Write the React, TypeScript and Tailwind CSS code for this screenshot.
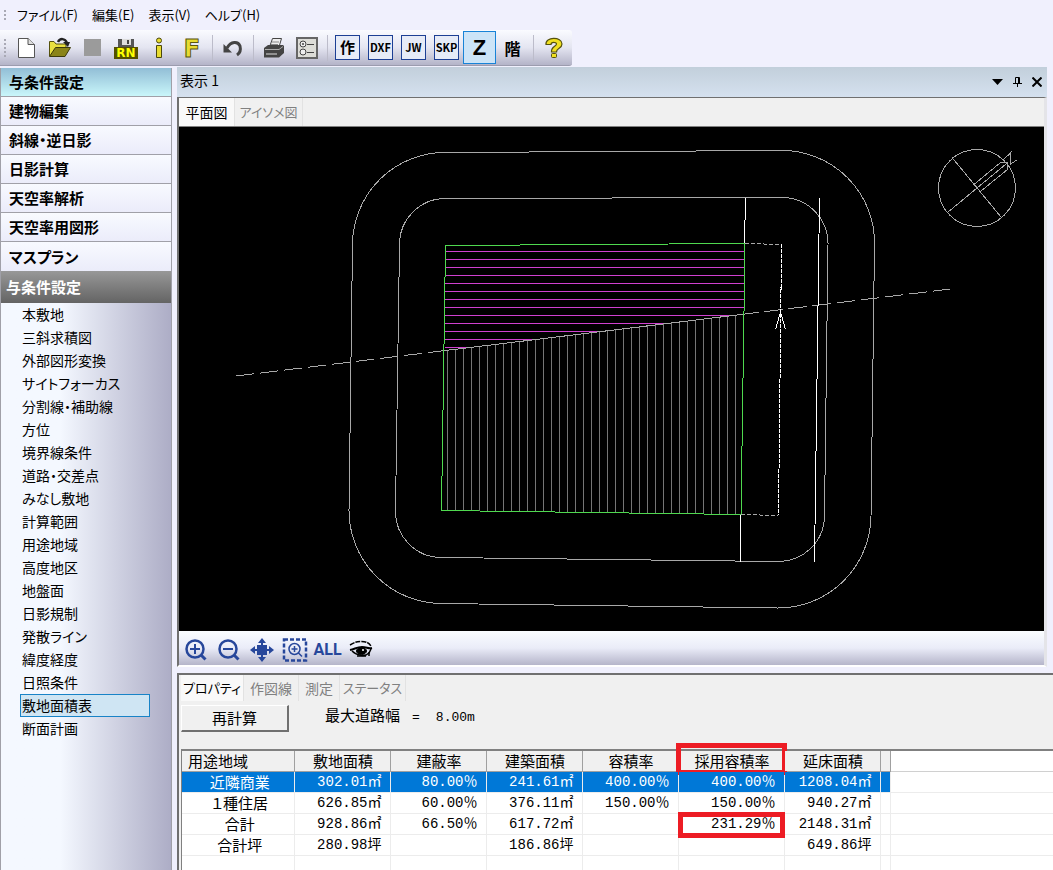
import { useState } from 'react';
import type { ReactNode } from 'react';
import clsx from 'clsx';

const MENUS = ['ファイル(F)', '編集(E)', '表示(V)', 'ヘルプ(H)'];

const SECTIONS = ['与条件設定', '建物編集', '斜線・逆日影', '日影計算', '天空率解析', '天空率用図形', 'マスプラン'];

const ITEMS = [
  '本敷地', '三斜求積図', '外部図形変換', 'サイトフォーカス', '分割線・補助線', '方位', '境界線条件',
  '道路・交差点', 'みなし敷地', '計算範囲', '用途地域', '高度地区', '地盤面', '日影規制',
  '発散ライン', '緯度経度', '日照条件', '敷地面積表', '断面計画',
];

const VIEW_TABS = [
  { name: '平面図', size: 'w-[56px] text-sm' },
  { name: 'アイソメ図', size: 'w-[68px] text-[13px]' },
];

const PROPERTY_TABS = [
  { name: 'プロパティ', size: 'w-[63px] text-[13px]' },
  { name: '作図線', size: 'w-[55px] text-sm' },
  { name: '測定', size: 'w-[41px] text-sm' },
  { name: 'ステータス', size: 'w-[66px] text-[13px]' },
];

const COLUMNS = ['用途地域', '敷地面積', '建蔽率', '建築面積', '容積率', '採用容積率', '延床面積'];

const ROWS = [
  ['近隣商業', '302.01㎡', '80.00％', '241.61㎡', '400.00％', '400.00％', '1208.04㎡'],
  ['１種住居', '626.85㎡', '60.00％', '376.11㎡', '150.00％', '150.00％', '940.27㎡'],
  ['合計', '928.86㎡', '66.50％', '617.72㎡', '', '231.29％', '2148.31㎡'],
  ['合計坪', '280.98坪', '', '186.86坪', '', '', '649.86坪'],
  ['', '', '', '', '', '', ''],
];

/* ---------- toolbar icons ---------- */

function NewIcon() {
  return (
    <svg width="24" height="24" viewBox="0 0 24 24">
      <path d="M3.500 2.500H13L19.500 8.500V21.500H3.500Z" fill="#fff" stroke="#555" />
      <path d="M13 2.500V8.500H19.500" fill="#ddd" stroke="#555" />
    </svg>
  );
}

function OpenIcon() {
  return (
    <svg width="24" height="24" viewBox="0 0 24 24">
      <path d="M1.500 20V5.500H6L8 8H18V12" fill="#e8e040" stroke="#55510c" />
      <path d="M1.500 20.500L7.500 11.500H22.500L17 20.500Z" fill="#8a8418" stroke="#3c3a0a" />
      <path d="M10 6C12 2 17 2 19 7" fill="none" stroke="#222" strokeWidth="2.500" />
      <path d="M15 6H22L20 11Z" fill="#222" />
    </svg>
  );
}

function SaveNameIcon() {
  return (
    <svg width="26" height="26" viewBox="0 0 26 26">
      <path d="M5 4H21V17H5Z" fill="#555" />
      <path d="M9 4H18V10H9Z" fill="#ddd" />
      <path d="M14 5H16V9H14Z" fill="#444" />
      <rect x="1" y="12" width="24" height="12" fill="#555000" />
      <text x="13" y="22" textAnchor="middle" fontSize="12" fontWeight="bold" fill="#ffff00" fontFamily="DejaVu Sans, sans-serif">RN</text>
    </svg>
  );
}

function InfoIcon() {
  return (
    <svg width="24" height="24" viewBox="0 0 24 24" fill="#e8dc30" stroke="#4b480d">
      <circle cx="12" cy="4.500" r="2.500" />
      <path d="M9.500 9.500H14.500V21.500H9.500Z" />
    </svg>
  );
}

function LetterFIcon() {
  return (
    <svg width="28" height="31" viewBox="0 0 28 31" className="shrink-0">
      <text x="14" y="25" textAnchor="middle" fontSize="24" fontWeight="bold" fill="#e8dc30" stroke="#5a5610" fontFamily="DejaVu Sans, sans-serif">F</text>
    </svg>
  );
}

function UndoIcon() {
  return (
    <svg width="24" height="24" viewBox="0 0 24 24">
      <path d="M6 12C10 5 17 5 19 10C20 14 19 17 16 19" fill="none" stroke="#444" strokeWidth="3" />
      <path d="M2.500 8V16.500H11Z" fill="#444" />
    </svg>
  );
}

function PrinterIcon() {
  return (
    <svg width="24" height="24" viewBox="0 0 24 24">
      <path d="M7.500 11L10.500 2.500H19.500L17 11Z" fill="#eee" stroke="#444" />
      <path d="M10 6H17M9 8.500H16" stroke="#888" />
      <path d="M2 12L6 9H21L22 10V17L17 21.500H2Z" fill="#444" />
      <path d="M3 13.500H17L21 10.500" fill="none" stroke="#aaa" />
      <path d="M4 18H15" stroke="#ddd" />
    </svg>
  );
}

function OptionsIcon() {
  return (
    <svg width="24" height="24" viewBox="0 0 24 24">
      <rect x="2" y="2" width="20" height="20" fill="#ddddd8" stroke="#666" strokeWidth="2" />
      <g fill="#eee" stroke="#444">
        <circle cx="8" cy="8" r="3" />
        <circle cx="8" cy="16" r="3" />
        <path d="M12 8.500H19M12 16.500H19" />
      </g>
      <circle cx="8" cy="8" r="1" fill="#444" />
    </svg>
  );
}

function HelpIcon() {
  return (
    <svg width="24" height="24" viewBox="0 0 24 24" fill="#f0e020" stroke="#55510c">
      <path d="M4 8.500C3 .5 20 .5 20 8C20 12.500 14.500 12 14.500 16H9.500C9 10.500 14.500 10.500 14.500 8C14.500 6 9 5.500 9 8.500Z" strokeWidth="1.200" />
      <rect x="9.500" y="17.500" width="5" height="4" rx="1" />
    </svg>
  );
}

function BoxLabel({ children }: { children: ReactNode }) {
  return (
    <span className="flex h-[25px] w-[25px] items-center justify-center border border-[#1c3f94] bg-[#e6ebf7] text-[11px] font-bold">
      {children}
    </span>
  );
}

function ToolButton({ label, active, children }: { label: string; active?: boolean; children: ReactNode }) {
  return (
    <button
      aria-label={label}
      className={clsx(
        'flex h-[33px] w-[33px] shrink-0 items-center justify-center border',
        active ? 'border-[#1883d7] bg-[#cce4f7]' : 'border-transparent',
      )}
    >
      {children}
    </button>
  );
}

function Separator() {
  return (
    <div className="flex w-2 shrink-0 justify-center">
      <div className="h-[26px] w-px bg-[#bcbcca]" />
    </div>
  );
}

function Grip({ dots }: { dots: number }) {
  return (
    <div className="flex w-[10px] shrink-0 flex-col items-center gap-[2px]">
      {Array.from({ length: dots }, (_, i) => (
        <span key={i} className="h-[2px] w-[2px] bg-[#a9a9b5]" />
      ))}
    </div>
  );
}

function MainToolbar() {
  return (
    <div className="flex h-9 w-[572px] shrink-0 items-center rounded-r-[3px] border-b border-[#9c9cae] bg-linear-to-b from-[#fafbff] via-[#e4e5f1] to-[#b4b4c8]">
      <Grip dots={5} />
      <ToolButton label="新規"><NewIcon /></ToolButton>
      <ToolButton label="開く"><OpenIcon /></ToolButton>
      <ToolButton label="保存"><span className="h-[17px] w-[17px] bg-[#9b9b9b]" /></ToolButton>
      <ToolButton label="名前を付けて保存"><SaveNameIcon /></ToolButton>
      <ToolButton label="情報"><InfoIcon /></ToolButton>
      <ToolButton label="書式"><LetterFIcon /></ToolButton>
      <Separator />
      <ToolButton label="元に戻す"><UndoIcon /></ToolButton>
      <Separator />
      <ToolButton label="印刷"><PrinterIcon /></ToolButton>
      <ToolButton label="設定"><OptionsIcon /></ToolButton>
      <Separator />
      <ToolButton label="作図"><BoxLabel><span className="text-[15px]">作</span></BoxLabel></ToolButton>
      <ToolButton label="DXF"><BoxLabel>DXF</BoxLabel></ToolButton>
      <ToolButton label="JW"><BoxLabel>JW</BoxLabel></ToolButton>
      <ToolButton label="SKP"><BoxLabel>SKP</BoxLabel></ToolButton>
      <ToolButton label="Z" active>
        <span className="font-['Liberation_Sans',sans-serif] text-[22px] leading-6 font-bold">Z</span>
      </ToolButton>
      <ToolButton label="階"><span className="text-base font-bold">階</span></ToolButton>
      <Separator />
      <ToolButton label="ヘルプ"><HelpIcon /></ToolButton>
    </div>
  );
}

/* ---------- side panel ---------- */

function Sidebar() {
  const [section, setSection] = useState('与条件設定');
  const [item, setItem] = useState('敷地面積表');

  return (
    <aside className="mt-px flex w-[172px] shrink-0 flex-col border-x border-[#a0a0a8] bg-[#f0f0fd]">
      {SECTIONS.map(name => (
        <button
          key={name}
          onClick={() => setSection(name)}
          className={clsx(
            'h-[29px] shrink-0 border-b border-[#a0a0a8] bg-linear-to-b px-2 text-left text-[15px] leading-7 font-bold last-of-type:border-b-0',
            name === section ? 'from-[#92bed6] to-[#c9f6fa]' : 'from-[#f8faff] to-[#ebecfa]',
          )}
        >
          {name}
        </button>
      ))}
      <h2 className="h-8 shrink-0 bg-linear-to-b from-[#989898] to-[#646464] px-[5px] text-[15px] leading-8 font-bold text-white">
        {section}
      </h2>
      <ul className="flex-1 bg-linear-to-r from-[#f4f8ff] from-35% to-[#adadc6]">
        {ITEMS.map(name => (
          <li key={name} className="h-[23px] pr-[21px] pl-[19px]">
            <button
              onClick={() => setItem(name)}
              className={clsx(
                'block h-full w-full border px-px text-left text-sm leading-[21px]',
                name === item ? 'border-[#1883c7] bg-[#cfe5f3]' : 'border-transparent',
              )}
            >
              {name}
            </button>
          </li>
        ))}
      </ul>
    </aside>
  );
}

/* ---------- drawing ---------- */

// y of the zoning boundary at a given x
const boundaryY = (x: number) => 376 - (x - 236) * 0.1218;
const boundaryX = (y: number) => 236 + (376 - y) / 0.1218;

const HATCH_H = Array.from({ length: 13 }, (_, i) => 251.5 + i * 8);
const HATCH_V = Array.from({ length: 37 }, (_, i) => 447.5 + i * 8);

function PlanView() {
  return (
    <svg
      role="img"
      aria-label="平面図"
      className="block h-[504px] w-full bg-black"
      viewBox="179 127 865 504"
      fill="none"
      stroke="#a8a8a8"
      shapeRendering="crispEdges"
    >
      {/* offset ranges */}
      <path d="M352.500 244A92.500 92.500 0 0 1 445 152.500L782 150.500A92.500 92.500 0 0 1 874.500 244L871 517A93 93 0 0 1 777 608L441 603.500A93 93 0 0 1 349 510Z" />
      <path d="M399.500 245A46 46 0 0 1 445 198.500L782 197.500A46 46 0 0 1 828 245L824.500 516A46 46 0 0 1 777 561.500L441 557.500A46 46 0 0 1 395.500 510Z" />

      {/* hatching */}
      {HATCH_H.map(y => (
        <line key={y} x1={445} y1={y} x2={Math.min(744, boundaryX(y))} y2={y} stroke="#d040d0" />
      ))}
      {HATCH_V.map(x => (
        <line key={x} x1={x} y1={boundaryY(x)} x2={x} y2={511 + (x - 442) * 0.012} stroke="#757575" />
      ))}

      {/* zoning boundary */}
      <path d="M236 376L950.500 289" strokeDasharray="18.200 6" />
      <path d="M443 350.800L743 314.300" />

      {/* site */}
      <path d="M445.500 245.500L745 243.500L741 514.500L441.500 510.500Z" stroke="#4fd94f" />

      {/* road */}
      <g stroke="#fff">
        <path d="M745.500 198L744.500 243M740.500 515V562M819.500 198L814.500 562" />
        <path d="M781.500 244.500L778.500 515.500" strokeDasharray="4 1" />
        <path d="M775.500 329.500L780.500 312L785.500 329.500" />
      </g>
      <path d="M745 243.500L781.500 244.500M741 514.500L778.500 515.500" strokeDasharray="4 2" />

      {/* compass */}
      <circle cx="977" cy="188" r="38.500" />
      <path d="M952 157.500L1001 217M947.500 212.500L1006 164" />
      <path d="M973.500 185L1000.500 162.500H1007.500V169.500L981 191" />
      <path d="M1003 160L1011 152.500L1010.500 164L1017 160" />
    </svg>
  );
}

/* ---------- view controls ---------- */

function ZoomIcon({ plus }: { plus?: boolean }) {
  return (
    <svg width="24" height="24" viewBox="0 0 24 24" fill="none" stroke="#27479b">
      <circle cx="11" cy="11" r="8.500" strokeWidth="2.500" />
      <path d="M17 17L21.500 21.500" strokeWidth="3" />
      <path d={plus ? 'M6 11H16M11 6V16' : 'M6 11H16'} strokeWidth="2" />
    </svg>
  );
}

function PanIcon() {
  return (
    <svg width="24" height="24" viewBox="0 0 24 24" fill="#27479b">
      <rect x="7" y="7" width="10" height="10" />
      <path d="M12 0L16 5H13V7H11V5H8ZM12 24L8 19H11V17H13V19H16ZM0 12L5 8V11H7V13H5V16ZM24 12L19 16V13H17V11H19V8Z" />
    </svg>
  );
}

function ZoomAreaIcon() {
  return (
    <svg width="26" height="24" viewBox="0 0 26 24" fill="none" stroke="#27479b">
      <rect x="2" y="1.500" width="22" height="21" strokeWidth="2.500" strokeDasharray="4 2" />
      <circle cx="12.500" cy="11" r="5.500" strokeWidth="1.500" />
      <path d="M9.500 11H15.500M12.500 8V14M16.500 15L20 18.500" strokeWidth="1.500" />
    </svg>
  );
}

function EyeIcon() {
  return (
    <svg width="24" height="20" viewBox="0 0 24 20" fill="none" stroke="#000">
      <path d="M1 5C6 2 8 1.500 12 1.500C17 1.500 20 2.500 22 6" strokeWidth="1.500" strokeDasharray="5 1" />
      <path d="M1 10C6 9 8 7 13 7C18 7 19 9 23 8" strokeWidth="2" />
      <path d="M3 11C8 16 16 17 20 13L22 9" strokeWidth="1.500" />
      <ellipse cx="12.500" cy="11" rx="5" ry="3.500" fill="#000" />
      <path d="M8 16H17M20 12V16" strokeWidth="1.500" />
      <circle cx="14" cy="10" r="1" fill="#fff" stroke="none" />
    </svg>
  );
}

function ViewToolbar() {
  return (
    <div className="flex h-[34px] items-center bg-linear-to-b from-[#fafdff] via-[#eaecf8] to-[#b5b5ca] pt-[3px]">
      <ToolButton label="拡大"><ZoomIcon plus /></ToolButton>
      <ToolButton label="縮小"><ZoomIcon /></ToolButton>
      <ToolButton label="移動"><PanIcon /></ToolButton>
      <ToolButton label="範囲拡大"><ZoomAreaIcon /></ToolButton>
      <ToolButton label="ALL">
        <span className="font-['Roboto',sans-serif] text-base font-bold text-[#27479b]">ALL</span>
      </ToolButton>
      <ToolButton label="表示切替"><EyeIcon /></ToolButton>
    </div>
  );
}

interface TabProps {
  size: string;
  active: boolean;
  onClick: () => void;
  children: ReactNode;
}

function Tab({ size, active, onClick, children }: TabProps) {
  return (
    <button
      role="tab"
      aria-selected={active}
      onClick={onClick}
      className={clsx(
        'shrink-0 border-r border-[#e2e2e2] text-center whitespace-nowrap',
        size,
        active ? 'bg-[#f9f9f9] text-black' : 'text-[#808080]',
      )}
    >
      {children}
    </button>
  );
}

function ViewWindow() {
  const [view, setView] = useState('平面図');

  return (
    <section className="mr-[6px] shrink-0">
      <header className="flex h-[30px] items-center bg-linear-to-b from-[#c2cfdb] to-[#d5e1ef] pl-[3px]">
        <h1 className="flex-1 pb-1 text-sm">表示 1</h1>
        <button aria-label="メニュー" className="px-[5px]">
          <svg width="11" height="6" viewBox="0 0 11 6"><path d="M0 0H11L5.500 6Z" /></svg>
        </button>
        <button aria-label="固定" className="px-[5px]">
          <svg width="9" height="10" viewBox="0 0 9 10" fill="none" stroke="#000">
            <path d="M2.500 6V.5H6.500V6M0 6.500H9M4.500 7V10" />
            <path d="M6 1V6" strokeWidth="2" />
          </svg>
        </button>
        <button aria-label="閉じる" className="px-[5px]">
          <svg width="10" height="10" viewBox="0 0 10 10" stroke="#000" strokeWidth="2"><path d="M.5.5L9.500 9.500M9.500.5L.5 9.500" /></svg>
        </button>
      </header>
      <div className="border-t border-r-3 border-b-2 border-l-2 border-t-[#707070] border-r-[#e4e4e8] border-b-white border-l-[#707070]">
        <div role="tablist" className="flex h-[29px] border-b border-[#808080] bg-[#f0f0f0]">
          {VIEW_TABS.map(({ name, size }) => (
            <Tab key={name} size={size} active={name === view} onClick={() => setView(name)}>{name}</Tab>
          ))}
        </div>
        <PlanView />
        <ViewToolbar />
      </div>
    </section>
  );
}

/* ---------- properties ---------- */

function AreaTable() {
  return (
    <table className="w-full table-fixed border-collapse">
      <colgroup>
        <col className="w-[112px]" />
        <col className="w-[96px]" />
        <col className="w-[96px]" />
        <col className="w-[96px]" />
        <col className="w-[96px]" />
        <col className="w-[106px]" />
        <col className="w-[96px]" />
        <col className="w-[10px]" />
        <col />
      </colgroup>
      <thead>
        <tr className="h-5 text-[15px] leading-4">
          {COLUMNS.map((name, i) => (
            <th
              key={name}
              className={clsx(
                'relative border-r border-b border-[#a0a0a0] bg-[#f0f0f0] p-0 font-normal whitespace-nowrap',
                i === 0 ? 'pl-1.5 text-left' : 'pl-0.5 text-center',
              )}
            >
              {name}
              {name === '採用容積率' && (
                <span className="absolute -inset-x-[3px] -top-2 -bottom-1 border-[5px] border-[#ed1c24]" />
              )}
            </th>
          ))}
          <th className="border-r border-b border-[#a0a0a0] bg-[#f0f0f0] p-0" />
          <th className="border-b border-[#d0d0d0] p-0" />
        </tr>
      </thead>
      <tbody>
        {ROWS.map((row, r) => (
          <tr key={r} className="h-[21px]">
            {row.map((cell, c) => (
              <td
                key={c}
                className={clsx(
                  'relative border-r border-b border-[#ececec] p-0 align-middle whitespace-nowrap',
                  c === 0
                    ? 'pl-1 text-center text-[15px] leading-5'
                    : "pr-2 text-right font-['Liberation_Mono','Noto_Sans_CJK_JP',monospace] text-sm leading-5",
                  r === 0 && 'bg-[#0078d7] text-white',
                )}
              >
                {cell}
                {cell === '231.29％' && (
                  <span className="absolute -inset-x-px -top-[2px] -bottom-1 border-[5px] border-[#ed1c24]" />
                )}
              </td>
            ))}
            <td className={clsx('border-r border-b border-[#ececec] p-0', r === 0 && 'bg-[#0078d7]')} />
            <td className="border-b border-[#ececec] p-0" />
          </tr>
        ))}
      </tbody>
    </table>
  );
}

function PropertyPanel() {
  const [tab, setTab] = useState('プロパティ');

  return (
    <section className="mt-1.5 flex min-h-0 flex-1 flex-col overflow-hidden border-t-2 border-l-2 border-[#707070] bg-[#f0f0f0] pl-[2px]">
      <div role="tablist" className="flex h-[26px] shrink-0">
        {PROPERTY_TABS.map(({ name, size }) => (
          <Tab key={name} size={size} active={name === tab} onClick={() => setTab(name)}>{name}</Tab>
        ))}
      </div>
      <div className="flex h-[48px] shrink-0 items-start pt-1 text-[15px]">
        <button className="h-[27px] w-[108px] border-t border-r-2 border-b-2 border-l border-t-white border-r-[#707070] border-b-[#707070] border-l-white leading-6">
          再計算
        </button>
        <dl className="flex items-baseline gap-3 pl-9 leading-5">
          <dt>最大道路幅</dt>
          <dd className="flex gap-4 font-['Liberation_Mono','Noto_Sans_CJK_JP',monospace] text-[13px]">
            <span>=</span>
            <span>8.00m</span>
          </dd>
        </dl>
      </div>
      <div className="min-h-0 flex-1 border-t-2 border-l border-[#808080] bg-white">
        <AreaTable />
      </div>
    </section>
  );
}

export default function App() {
  return (
    <div className="flex h-screen flex-col overflow-hidden bg-[#f0f0fd] font-['Noto_Sans_CJK_JP',sans-serif] text-black [font-feature-settings:'palt']">
      <nav className="flex h-[30px] shrink-0 items-center">
        <Grip dots={3} />
        <div className="flex gap-[14px] pl-[7px] text-[13px]">
          {MENUS.map(name => (
            <button key={name}>{name}</button>
          ))}
        </div>
      </nav>
      <MainToolbar />
      <div className="flex min-h-0 flex-1 gap-[5px] pt-px">
        <Sidebar />
        <main className="flex min-w-0 flex-1 flex-col">
          <ViewWindow />
          <PropertyPanel />
        </main>
      </div>
    </div>
  );
}
